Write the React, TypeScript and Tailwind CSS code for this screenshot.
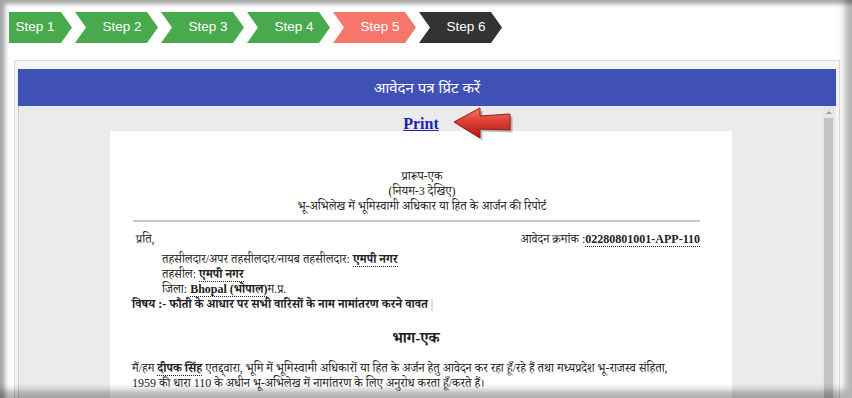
import React from "react";

const steps = [
  { label: "Step 1", color: "bg-[#48aa4c]", first: true },
  { label: "Step 2", color: "bg-[#48aa4c]" },
  { label: "Step 3", color: "bg-[#48aa4c]" },
  { label: "Step 4", color: "bg-[#48aa4c]" },
  { label: "Step 5", color: "bg-[#f7766b]" },
  { label: "Step 6", color: "bg-[#333333]" },
];

function Dotted({ children }: { children: React.ReactNode }) {
  return <span className="font-bold border-b border-dotted border-[#222]">{children}</span>;
}

export default function App() {
  return (
    <div className="relative w-[852px] h-[398px] overflow-hidden bg-white font-['Liberation_Sans',Arial,sans-serif]">
      {/* steps */}
      <div className="flex gap-[3px] pt-[12px] pl-[9px]">
        {steps.map((s) =>
          s.first ? (
            <div
              key={s.label}
              className={`${s.color} w-[63px] h-[31px] flex items-center justify-center pr-[11px] text-white text-[13.5px] [clip-path:polygon(0_0,calc(100%_-_11px)_0,100%_50%,calc(100%_-_11px)_100%,0_100%)]`}
            >
              {s.label}
            </div>
          ) : (
            <div
              key={s.label}
              className={`${s.color} w-[83px] h-[31px] flex items-center justify-center pl-[11px] text-white text-[13.5px] [clip-path:polygon(0_0,calc(100%_-_11px)_0,100%_50%,calc(100%_-_11px)_100%,0_100%,11px_50%)]`}
            >
              {s.label}
            </div>
          )
        )}
      </div>

      {/* panel */}
      <div className="mt-[17px] ml-[14px] mr-[12px] border border-[#dcdcdc] bg-[#f5f5f5] pt-[8px] px-[3px] h-[360px] flex flex-col">
        <div className="h-[37px] bg-[#3f51b5] flex items-center justify-center text-white text-[15px] font-['Noto_Sans',sans-serif] shadow-[0_1px_1px_rgba(0,0,0,0.25)]">
          आवेदन पत्र प्रिंट करें
        </div>
        <div className="flex-1 flex bg-[#ebebeb] border-l border-[#cfcfcf]">
          <div className="flex-1 flex flex-col items-center">
            <div className="pt-[6px] h-[25px]">
              <div className="relative">
                <a className="text-[#1f1fb0] underline font-bold text-[16px] leading-[18px] font-['Liberation_Serif',serif]">Print</a>
                <svg
                  className="absolute left-[calc(100%_+_14px)] top-[-5px]"
                  width="60"
                  height="34"
                  viewBox="0 0 60 34"
                >
                  <defs>
                    <linearGradient id="ag" x1="0" y1="0" x2="0" y2="1">
                      <stop offset="0" stopColor="#f27a6c" />
                      <stop offset="0.5" stopColor="#dc3a2e" />
                      <stop offset="1" stopColor="#a81c14" />
                    </linearGradient>
                  </defs>
                  <path d="M3 16 L28 2 L28 10 L58 8 L58 24 L28 23 L28 32 Z" fill="rgba(0,0,0,0.25)" transform="translate(1.5,1.5)" />
                  <path d="M1 15 L27 1 L27 9 L57 7 L57 23 L27 22 L27 31 Z" fill="url(#ag)" stroke="#9a1911" strokeWidth="1" />
                </svg>
              </div>
            </div>
            <div className="w-[622px] flex-1 bg-white pt-[38px] pl-[22px] pr-[32px] text-[12px] leading-[15px] text-[#222] font-['Liberation_Serif','Noto_Serif_Devanagari','Noto_Sans_Devanagari',serif]">
              <div className="text-center pl-[12px]">
                <div>प्रारूप-एक</div>
                <div>(नियम-3 देखिए)</div>
                <div>भू-अभिलेख में भूमिस्वामी अधिकार या हित के आर्जन की रिपोर्ट</div>
              </div>
              <div className="mt-[6px] h-[2px] bg-[#c8c8c8] ml-[1px]" />
              <div className="mt-[10px] flex justify-between pl-[4px]">
                <span>प्रति,</span>
                <span>
                  आवेदन क्रमांक :<Dotted>02280801001-APP-110</Dotted>
                </span>
              </div>
              <div className="mt-[5px] pl-[30px]">
                <div>
                  तहसीलदार/अपर तहसीलदार/नायब तहसीलदार: <Dotted>एमपी नगर</Dotted>
                </div>
                <div>
                  तहसील: <Dotted>एमपी नगर</Dotted>
                </div>
                <div>
                  जिला: <Dotted>Bhopal (भोपाल)</Dotted>म.प्र.
                </div>
              </div>
              <div>
                <span className="font-bold">विषय :- फौती के आधार पर सभी वारिसों के नाम नामांतरण करने वावत</span>
                <span className="text-[#999]"> |</span>
              </div>
              <div className="mt-[16px] text-center font-bold text-[15px] leading-[20px]">भाग-एक</div>
              <div className="mt-[13px]">
                मैं/हम <Dotted>दीपक सिंह</Dotted> एतद्द्वारा, भूमि में भूमिस्वामी अधिकारों या हित के अर्जन हेतु आवेदन कर रहा हूँ/रहे हैं तथा मध्यप्रदेश भू-राजस्व संहिता,
                <br />
                1959 की धारा 110 के अधीन भू-अभिलेख में नामांतरण के लिए अनुरोध करता हूँ/करते हैं।
              </div>
            </div>
          </div>
          {/* scrollbar */}
          <div className="w-[11px] mr-[2px] flex flex-col bg-[#e6e6e6]">
            <div className="h-[12px] flex items-center justify-center">
              <div className="w-0 h-0 border-l-[3px] border-r-[3px] border-b-[3px] border-l-transparent border-r-transparent border-b-[#a3a3a3]" />
            </div>
            <div className="flex-1 mx-[1px] bg-[#c3c3c3]" />
          </div>
        </div>
      </div>

      {/* frame shadow overlay */}
      <div className="pointer-events-none absolute inset-0 shadow-[inset_5px_4px_4px_rgba(0,0,0,0.35),inset_-7px_-8px_7px_rgba(0,0,0,0.3)]" />
    </div>
  );
}
